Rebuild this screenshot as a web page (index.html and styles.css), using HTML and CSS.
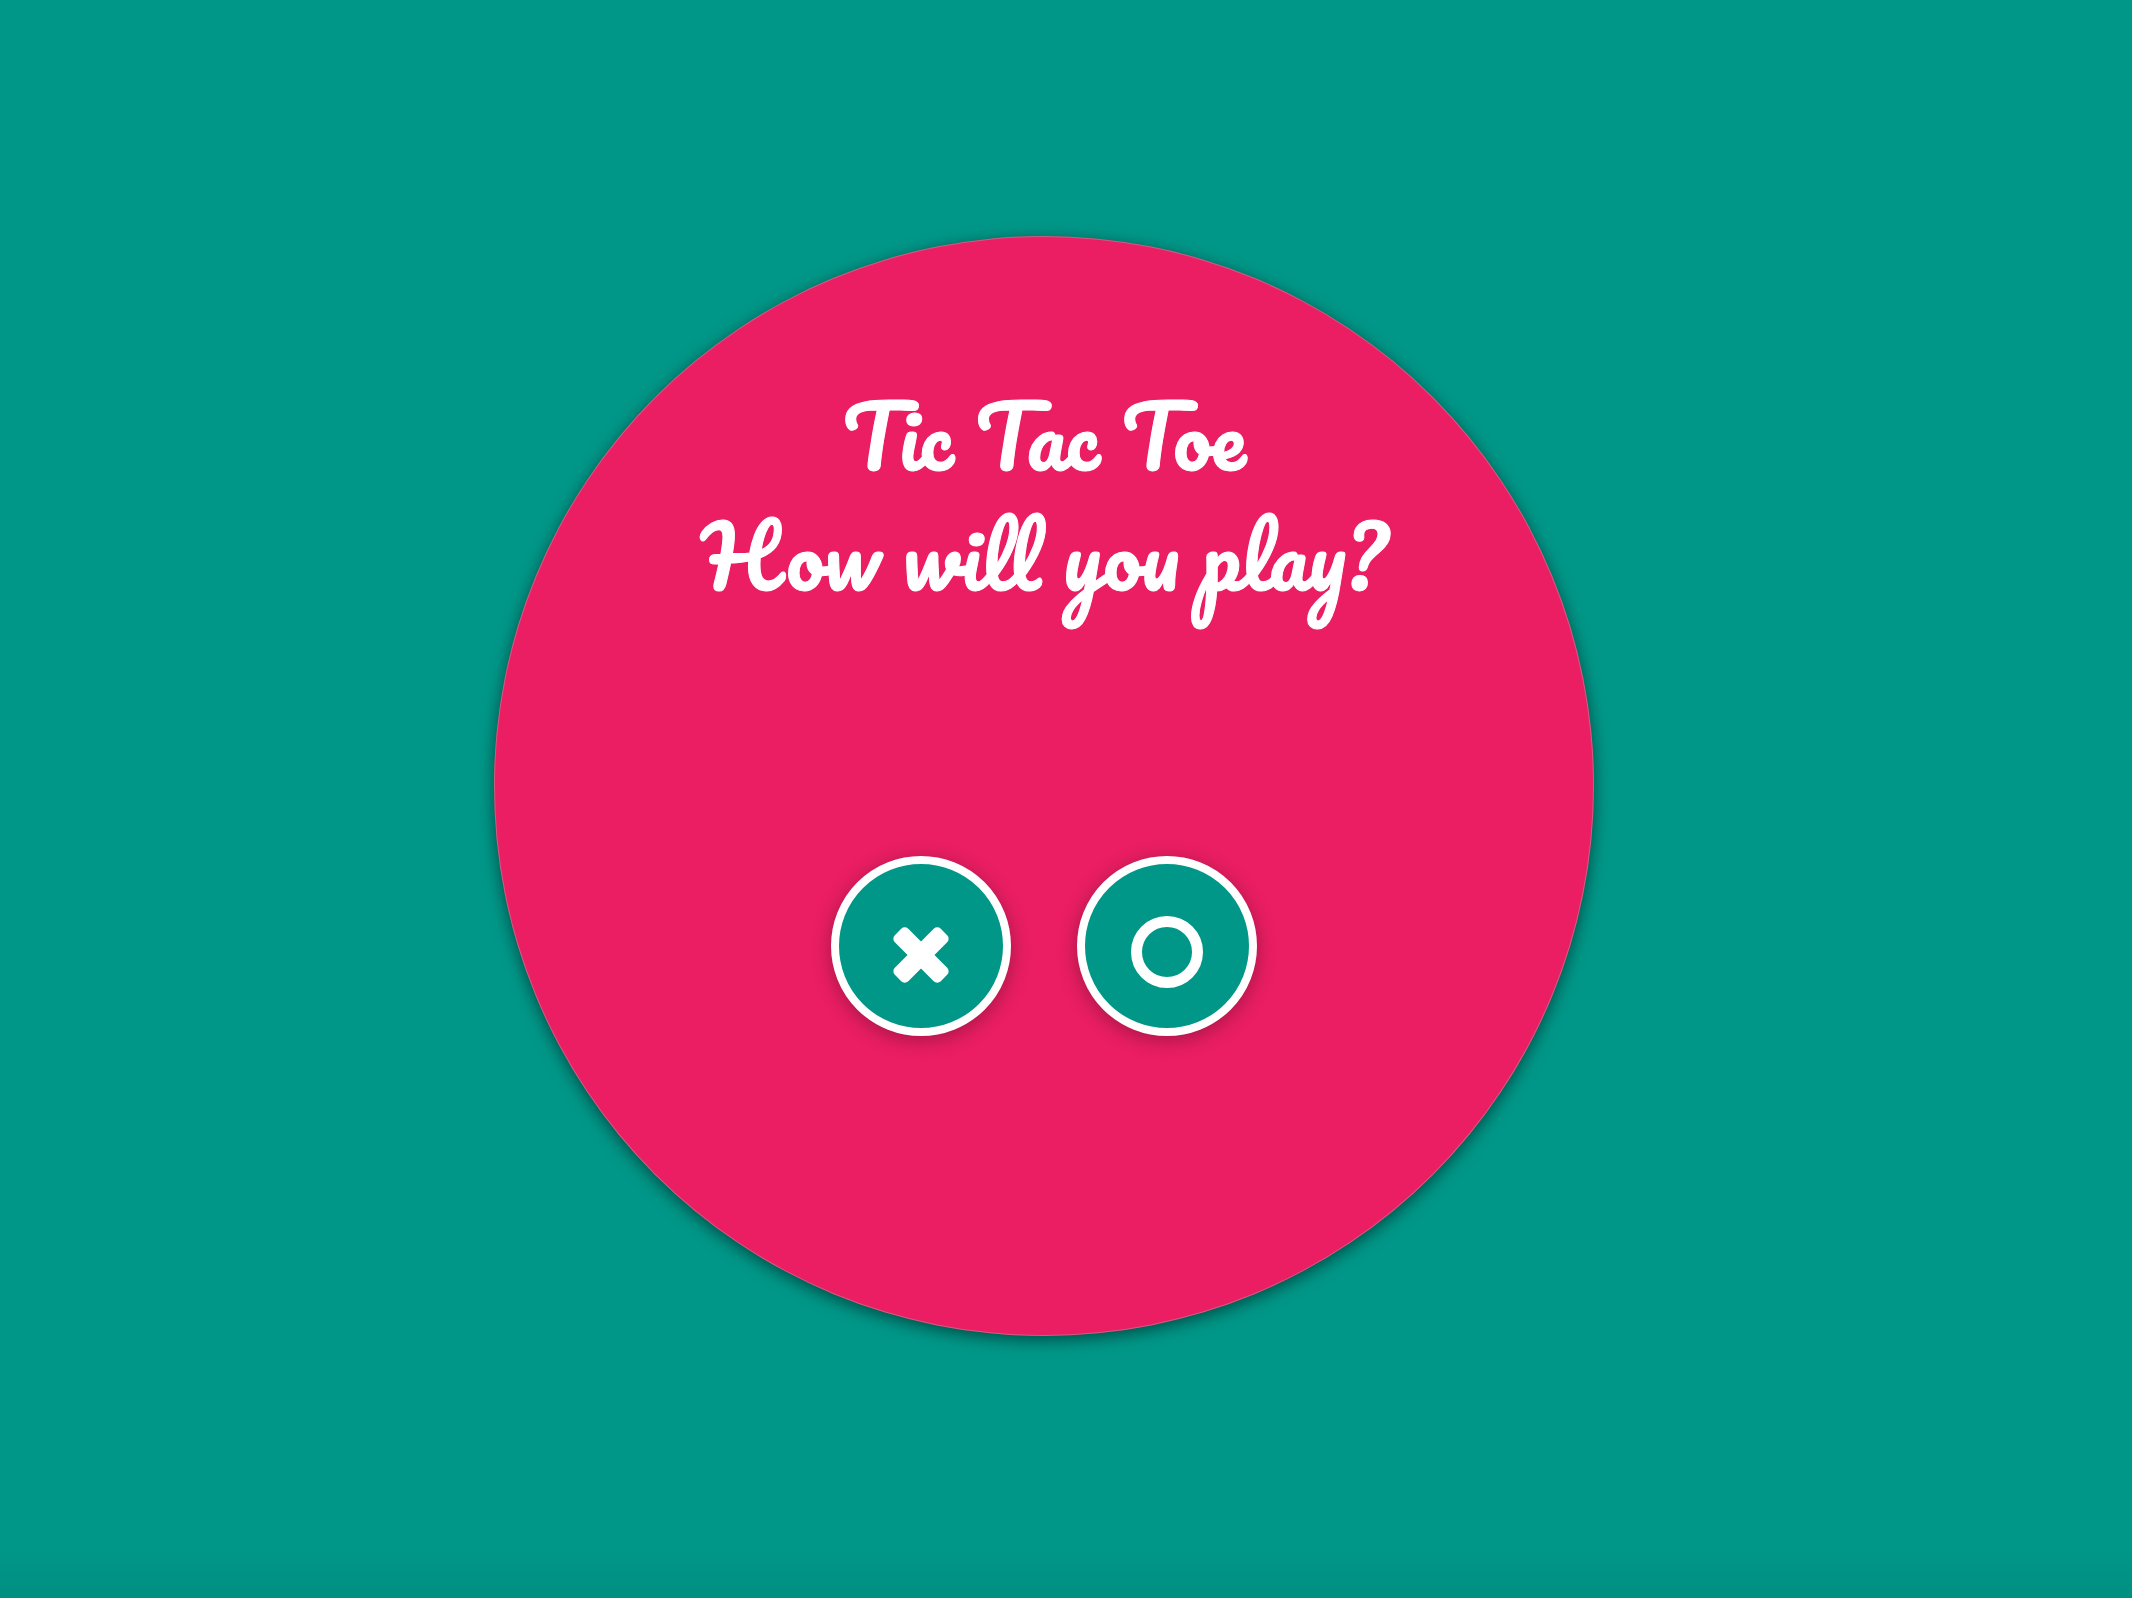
FILE: index.html
```html
<!DOCTYPE html>
<html lang="en">
<head>
<meta charset="utf-8">
<meta name="viewport" content="width=device-width, initial-scale=1">
<title>Tic Tac Toe</title>
<link rel="stylesheet" href="styles.css">
</head>
<body>
<main class="game">
  <section class="start">
    <h1 class="title">Tic Tac Toe<br>How will you play?</h1>
    <div class="choices">
      <button class="choice" type="button" aria-label="Play as X">
        <svg class="mark" viewBox="0 0 72 72" aria-hidden="true">
          <g transform="rotate(45 36 39)">
            <rect x="3.5" y="29.5" width="65" height="19" rx="5"/>
            <rect x="26.5" y="6.5" width="19" height="65" rx="5"/>
          </g>
        </svg>
      </button>
      <button class="choice" type="button" aria-label="Play as O">
        <svg class="mark" viewBox="0 0 72 72" aria-hidden="true">
          <circle class="ring" cx="36" cy="36" r="30.5"/>
        </svg>
      </button>
    </div>
  </section>
</main>
</body>
</html>
```
FILE: styles.css
```css
* {
  box-sizing: border-box;
}

body {
  margin: 0;
  color: #fff;
  background: #009788;
  font-family: Pacifico, Lato, cursive;
}

.game {
  display: flex;
  align-items: center;
  justify-content: center;
  min-height: 100vh;
  padding: 0 44px 26px 0;
  background: linear-gradient(to top, #008f81, #009788 48px);
}

.start {
  display: flex;
  flex-direction: column;
  align-items: center;
  gap: 240px;
  width: 1100px;
  max-width: 100%;
  aspect-ratio: 1;
  padding-top: 140px;
  border-radius: 50%;
  background: #eb1e63;
  box-shadow: 0 4px 16px rgba(0, 0, 0, 0.5), inset 0 0 0 1px rgba(170, 160, 160, 0.5);
}

.title {
  margin: 0;
  font-size: 84px;
  font-weight: 400;
  line-height: 120px;
  text-align: center;
  -webkit-text-stroke: 1px #fff;
}

.choices {
  display: flex;
  gap: 66px;
}

.choice {
  display: flex;
  justify-content: center;
  width: 180px;
  height: 180px;
  padding: 52px 0 0;
  border: 8px solid #fff;
  border-radius: 50%;
  background: #009788;
  box-shadow: 0 4px 20px rgba(0, 0, 0, 0.3);
  cursor: pointer;
}

.mark {
  width: 72px;
  height: 72px;
  fill: #fff;
}

.ring {
  fill: none;
  stroke: #fff;
  stroke-width: 11;
}
```
